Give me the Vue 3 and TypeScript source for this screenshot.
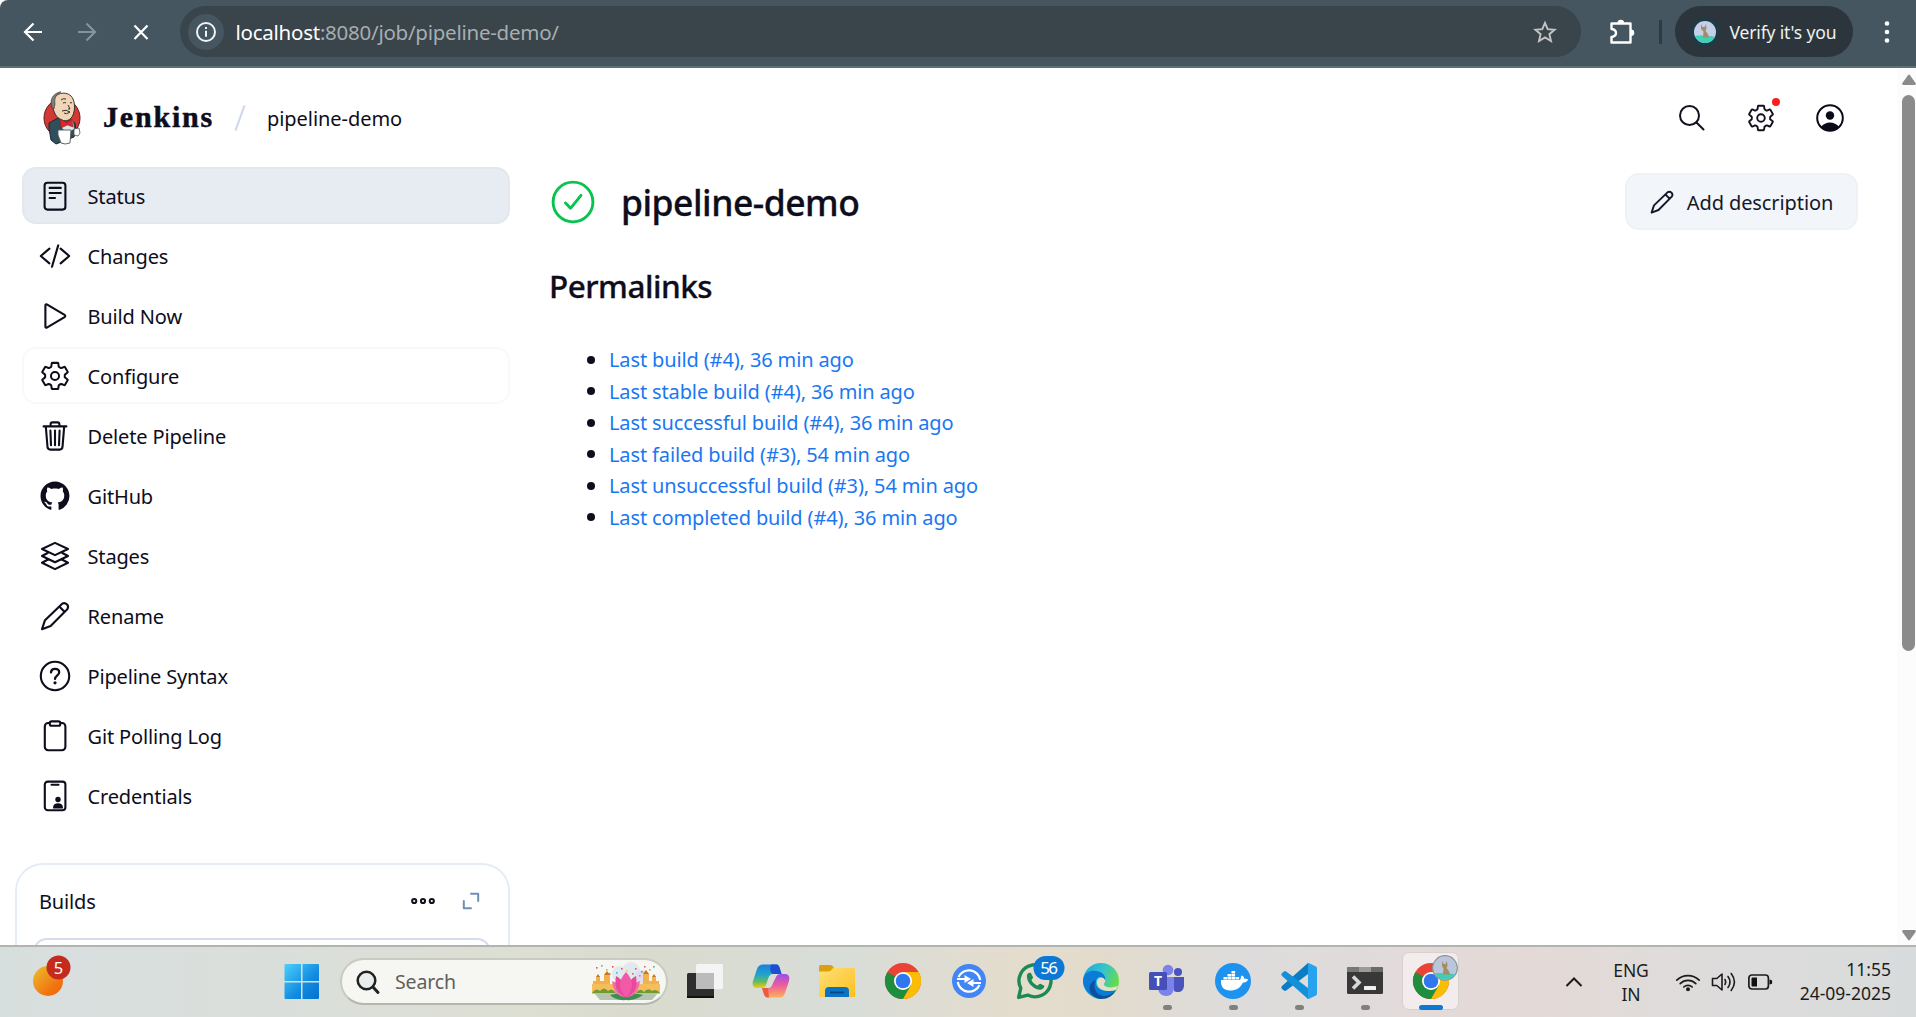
<script setup lang="ts">
interface SideItem { label: string; icon: string; state?: string }

const gear = '<g transform="translate(-.7 -.7) scale(.0613)" stroke-width="33"><circle cx="256" cy="256" r="66"/><path d="M416.39 256a154 154 0 01-1.53 20.8l45.2 35.4a10.8 10.8 0 012.46 13.8l-42.77 74a10.8 10.8 0 01-13.14 4.6l-44.9-18.1a16 16 0 00-15.17 1.75A164 164 0 01325 400.8a16 16 0 00-8.82 12.14l-6.73 47.9A11 11 0 01298.8 470h-85.6a11 11 0 01-10.7-8.9l-6.72-47.8a16 16 0 00-9-12.2 155 155 0 01-21.46-12.6 16 16 0 00-15.1-1.7l-44.9 18.1a10.8 10.8 0 01-13.14-4.6l-42.77-74a10.8 10.8 0 012.45-13.75l38.2-30a16 16 0 006-14.1c-.35-4.15-.57-8.3-.57-12.5s.2-8.25.58-12.35a16 16 0 00-6.07-13.94l-38.2-30A10.8 10.8 0 0149.5 186l42.75-74a10.8 10.8 0 0113.14-4.6l44.9 18.1a16 16 0 0015.17-1.75A164 164 0 01187 111.2a16 16 0 008.82-12.14l6.73-47.9A11 11 0 01213.2 42h85.6a11 11 0 0110.7 8.9l6.7 47.8a16 16 0 009 12.2 155 155 0 0121.5 12.6 16 16 0 0015.1 1.7l44.9-18.1a10.8 10.8 0 0113.1 4.6l42.8 74a10.8 10.8 0 01-2.45 13.75l-38.2 30a16 16 0 00-6.05 14.1c.3 4.1.5 8.3.5 12.45z"/></g>'
const pencil = '<path d="M2 28.2L5 19.2 22.2 2.7a3.9 3.9 0 015.3 5.3L10.6 25zM19.3 5.6l5.2 5.2"/>'

const items: SideItem[] = [
  { label: 'Status', state: 'active', icon: '<rect x="4.6" y="1.8" width="20.8" height="26.8" rx="2.8"/><path d="M9.6 6.9h11.2M9.6 12h11.2M9.6 17h5.4"/>' },
  { label: 'Changes', icon: '<path d="M9.4 7.6L.8 15l8.6 7.4M18.2 4.4L12 25.8M20.6 7.6l8.6 7.4-8.6 7.4"/>' },
  { label: 'Build Now', icon: '<path d="M5.4 4.2v21.6c0 .8.7 1.2 1.4.8l17.8-10.5c.9-.6.9-1.6 0-2.2L6.8 3.4c-.7-.4-1.4 0-1.4.8z"/>' },
  { label: 'Configure', state: 'outlined', icon: gear },
  { label: 'Delete Pipeline', icon: '<path d="M3.6 5.4h22.8M5.8 5.4l1.7 20.4c.1 1.9 1.1 2.8 2.8 2.8h9.4c1.7 0 2.7-.9 2.8-2.8l1.7-20.4M10.6 5.2V3.3c0-1.2.7-1.9 1.9-1.9h5c1.2 0 1.9.7 1.9 1.9v1.9M10.4 9.6l.6 14.6M15 9.6v14.6M19.6 9.6L19 24.2"/>' },
  { label: 'GitHub', icon: '<path transform="translate(.5 .6) scale(1.81)" fill="currentColor" stroke="none" d="M8 0C3.58 0 0 3.58 0 8c0 3.54 2.29 6.53 5.47 7.59.4.07.55-.17.55-.38 0-.19-.01-.82-.01-1.49-2.01.37-2.53-.49-2.69-.94-.09-.23-.48-.94-.82-1.13-.28-.15-.68-.52-.01-.53.63-.01 1.08.58 1.23.82.72 1.21 1.87.87 2.33.66.07-.52.28-.87.51-1.07-1.78-.2-3.64-.89-3.64-3.95 0-.87.31-1.59.82-2.15-.08-.2-.36-1.02.08-2.12 0 0 .67-.21 2.2.82.64-.18 1.32-.27 2-.27s1.36.09 2 .27c1.53-1.04 2.2-.82 2.2-.82.44 1.1.16 1.92.08 2.12.51.56.82 1.27.82 2.15 0 3.07-1.87 3.75-3.65 3.95.29.25.54.73.54 1.48 0 1.07-.01 1.93-.01 2.2 0 .21.15.46.55.38A8.01 8.01 0 0016 8c0-4.42-3.58-8-8-8z"/>' },
  { label: 'Stages', icon: '<path d="M15 1.9l13 6.1-13 6.1L2 8zM7.6 12L2 15l13 6.3L28 15l-5.6-3M7.6 18.8L2 21.8l13 6.3 13-6.3-5.6-3"/>' },
  { label: 'Rename', icon: pencil },
  { label: 'Pipeline Syntax', icon: '<circle cx="15" cy="15" r="14.2"/><path stroke-width="2.3" d="M11 11.3c.2-2 1.7-3.4 4-3.4 2.5 0 4.2 1.4 4.2 3.4 0 3.3-4.2 3.3-4.2 6.6"/><circle cx="15" cy="21.8" r="1.6" fill="currentColor" stroke="none"/>' },
  { label: 'Git Polling Log', icon: '<rect x="4.8" y="2" width="20.6" height="27.2" rx="3.4"/><rect x="9.8" y=".4" width="10.5" height="4.4" rx="1.8" fill="#fff"/>' },
  { label: 'Credentials', icon: '<rect x="4.8" y=".6" width="20.6" height="28.6" rx="3"/><path d="M11.5 3.8h7"/><g fill="currentColor" stroke="none"><circle cx="18" cy="18.5" r="2.7"/><path d="M13.1 27.4v-1.2c0-2.6 2.1-4 4.9-4s4.9 1.4 4.9 4v1.2z"/></g>' },
]

const links: string[] = [
  'Last build (#4), 36 min ago',
  'Last stable build (#4), 36 min ago',
  'Last successful build (#4), 36 min ago',
  'Last failed build (#3), 54 min ago',
  'Last unsuccessful build (#3), 54 min ago',
  'Last completed build (#4), 36 min ago',
]

const confetti: [number, number, string][] = [
  [4, 4, '#e55'], [9, 2, '#5b9'], [14, 6, '#e6a23c'], [20, 3, '#d55'], [24, 9, '#4bb'], [29, 5, '#e55'], [43, 5, '#e55'], [49, 8, '#3b9'],
  [52, 3, '#e65'], [57, 6, '#e6a23c'], [61, 3, '#4ba'], [40, 10, '#d66'], [17, 10, '#e66'], [34, 7, '#fb5'], [47, 12, '#d84'],
]

const chrome = '<circle r="18" fill="#ea4335"/><path d="M-15.6-9A18 18 0 000 18L8 4.5-7.8 4.5z" fill="#1e8e3e"/><path d="M0 18A18 18 0 0015.6-9H0L7.8 4.5z" fill="#fbbc04"/><path d="M-15.6-9L-7.8 4.5 0 0z" fill="#1e8e3e"/><circle r="9" fill="#fff"/><circle r="7.3" fill="#2f76ef"/>'

interface App { name: string; running?: boolean; active?: boolean; art: string }
const apps: App[] = [
  { name: 'Task view', art: '<rect x="-18" y="-8" width="27" height="25" rx="1.5" fill="#2e2e2e"/><path d="M-18 16h27" stroke="#111" stroke-width="2"/><rect x="-9" y="-17" width="27" height="25" rx="1.5" fill="#f4f4f4"/><path d="M-9-8H9V8H-9z" fill="#bbb"/>' },
  { name: 'Copilot', art: '<path d="M-8-16.5H5C8-16.5 8.5-14 9.5-10L10.5-7H2C-1-7-2-5-3-2L-5 4c-1 2-2 3-5 3h-4c-4 0-5-3-4-7l4-12c1-3 3-4.5 6-4.5z" fill="url(#cpA)"/><path d="M0-16.5h5c3 0 3.5 2.5 4.5 6L10.5-7H2C0-7 0-10-1-12z" fill="#1d4fd0"/><path d="M8 16.5H-3C-6 16.5-7 14-8 10l-1-3h6c3 0 4-2 5-5L5-4c1-2 2-3 5-3h4c4 0 5 3 4 7l-4 12c-1 3-3 4.5-6 4.5z" fill="url(#cpB)"/><path d="M-9 7h6l1 9.5C-6 17-7 14-8 10z" fill="#ef5a3c"/>' },
  { name: 'Files', art: '<path d="M-18-14.5q0-1.5 1.5-1.5h10q1.5 0 2.5 1.5L-2.5-12v8H-18z" fill="#dca00f"/><path d="M-18-9.5h10c2 0 3-3.5 5-3.5h19.5q1.5 0 1.5 1.5V16H-18z" fill="url(#folder)"/><path d="M-12 16V10q0-4 4-4H8q4 0 4 4v6z" fill="#0b72c4"/><path d="M-7 11.5H7" stroke="#08458a" stroke-width="1.8"/>' },
  { name: 'Chrome', art: chrome },
  { name: 'Sync', art: '<circle r="17" fill="#4285f4"/><g fill="none" stroke="#fff" stroke-width="2.2"><path d="M-10.5-4A11.5 11.5 0 0111.3-1M10.5 4A11.5 11.5 0 01-11.3 1"/><path d="M-12-2H-2M12 2H2"/></g><path d="M-4.5-6L2-2-4.5 2zM4.5-2L-2 2 4.5 6z" fill="#fff"/>' },
  { name: 'WhatsApp', art: '<path d="M-14.2 7.2A16 16 0 11-7.2 14.1L-16.4 16.4z" fill="none" stroke="#1c8a54" stroke-width="3.4" stroke-linejoin="round"/><path d="M-8-6c.5-2 3-2.8 4-1.8l2 4c0 1.6-1.5 2-1.5 3C-2.5 1.5.5 4 2.2 4.5 3.6 4.5 4 2.8 5.5 2.8l3.8 2C9.5 7 7 9 4.5 8.8-2 8-9 1-8-6z" fill="#1c8a54"/><rect x="-1.5" y="-25" width="31" height="24" rx="12" fill="#0a78d4"/><text x="14" y="-6.7" font-size="17" text-anchor="middle" fill="#fff" textLength="17.5">56</text>' },
  { name: 'Edge', art: '<circle r="18" fill="url(#edA)"/><path d="M-18-1C-17-9-10-11-5-10 2-9 5-5 4-1 1-5-4-5-5 0c-1 8 7 12 20 9A18 18 0 01-18-1z" fill="#0a7bd6"/><path d="M-5-1c-3 4-2 12 4 15 5 2 11 1 16.5-5.5A18 18 0 01-1 18C-13 16-15 2-5-1z" fill="#0f4f9e"/><path d="M-4 0c1-4 6-5 8-1 1 3-2 3-1 5 2 3 8 3 14 1l-2 4C4 12-5 8-4 0z" fill="#e4decb"/>' },
  { name: 'Teams', running: true, art: '<circle cx="11" cy="-9" r="4" fill="#4b53bc"/><circle cx="1" cy="-11" r="5.3" fill="#7b83eb"/><path d="M5-4h12V4c0 8-7 8-10 6z" fill="#4b53bc"/><path d="M-8-4h15V5c0 7-3 10-8 10s-8-4-8-8z" fill="#7b83eb"/><rect x="-18" y="-9" width="18" height="18" rx="1.5" fill="#464eb8"/><text x="-9" y="5" text-anchor="middle" font-size="14" font-weight="700" fill="#fff">T</text>' },
  { name: 'Docker', running: true, art: '<circle r="18" fill="#1d92ef"/><path d="M-12-1H7c1-1 .5-3 1.5-4.5C11-5 11-3 11.5-2c1.5-.4 3 0 3.5.7C14 1 12 1.5 10 1.5 7 7.5 3 9.5-3 9.5-9 9.5-12.5 6-12-1z" fill="#fff"/><path d="M-9.5-4h3.6v2.6h-3.6zM-5.5-4h3.6v2.6h-3.6zM-1.5-4h3.6v2.6h-3.6zM2.5-4h3.6v2.6H2.5zM-5.5-7h3.6v2.6h-3.6zM-1.5-7h3.6v2.6h-3.6zM-1.5-10h3.6v2.6h-3.6z" fill="#fff"/>' },
  { name: 'Code', running: true, art: '<path d="M9-18l-26 23q-1.5 1.5 0 3l2 1.5q1 .8 2.2 0L9-7z" fill="#0a7cc4"/><path d="M9 18l-26-23q-1.5-1.5 0-3l2-1.5q1-.8 2.2 0L9 7z" fill="#1291d8"/><path d="M8-17.5q.5-.8 1.6-.4L17-14.5q1 .6 1 2v25q0 1.4-1 2L9.6 17.9q-1 .4-1.6-.4c1 0 1-1 1-2v-31c0-1 0-2-1-2z" fill="#27a2ee"/>' },
  { name: 'Terminal', running: true, art: '<rect x="-18" y="-14" width="36" height="27" rx="1.5" fill="#383838"/><path d="M-18-12.5q0-1.5 1.5-1.5H-6v5h-12z" fill="#787878"/><path d="M-6-14H6v5H-6z" fill="#9a9a9a"/><path d="M6-14h10.5q1.5 0 1.5 1.5V-9H6z" fill="#6a6a6a"/><path d="M-12-4.5L-6 1.5-12 7.5" fill="none" stroke="#d8d8d8" stroke-width="3.6"/><rect x="-1" y="5" width="12" height="4" rx=".6" fill="#efefef"/>' },
  { name: 'Chrome profile', active: true, art: chrome + '<circle cx="14" cy="-13" r="12.3" fill="#b9c6dc" stroke="#8e9498" stroke-width="1.2"/><path d="M3.5-7.5c5-.8 14-.5 20.5 1A12 12 0 013.500-7.500z" fill="#43cdb9"/><path d="M11-20l1.500 3h2l1.500-3 .5 5-1 2c2 2 3 4 3.500 6.500H12l.5-6-1.500-2.500z" fill="#a58c65"/>' },
]
</script>

<template>
  <div class="screen">
    <header class="toolbar">
      <svg class="nav" width="150" height="30" viewBox="0 0 150 30" fill="none" stroke="#fff" stroke-width="2.2">
        <path d="M42 15H25.5M33.5 6.5L25 15l8.5 8.5" />
        <path d="M78 15h16.5M86.5 6.5L95 15l-8.5 8.5" stroke="#87939a" />
        <path d="M134.500 8.500l13 13.500M147.500 8.500l-13 13.500" />
      </svg>
      <div class="omnibox">
        <span class="info"><svg width="22" height="22" viewBox="0 0 22 22" fill="none" stroke="#f0f3f4" stroke-width="2"><circle cx="11" cy="11" r="9" /><path d="M11 9.8v6M11 6v2" /></svg></span>
        <span class="url"><b>localhost</b>:8080/job/pipeline-demo/</span>
        <svg class="star" width="24" height="24" viewBox="0 0 24 24" fill="none" stroke="#c3c4c4" stroke-width="1.9"><path d="M12 2.8l2.7 6.3 6.9.6-5.2 4.5 1.6 6.8-6-3.6-6 3.6 1.6-6.8-5.2-4.5 6.9-.6z" /></svg>
      </div>
      <svg class="puzzle" width="26" height="26" viewBox="0 0 26 26" fill="none" stroke="#fff" stroke-width="2.4" stroke-linejoin="round"><path d="M2.5 4.500H21.500V23.500H2.500V18c3.500-.5 4.500-2.500 4.500-4s-1-3.500-4.500-4z" /><path d="M8.500 4a3.300 3.300 0 016.600 0zM22 10.500a3.300 3.300 0 010 6.600z" fill="#fff" stroke="none" /></svg>
      <i class="divider"></i>
      <div class="profile">
        <svg width="28" height="28" viewBox="0 0 28 28"><circle cx="14" cy="14" r="13" fill="none" stroke="#173f4a" stroke-width="2" /><circle cx="14" cy="14" r="11" fill="#c4d0e8" /><path d="M4 18c5-.8 14-.5 20 1A11 11 0 014 18z" fill="#3fd0b8" /><path d="M10 6l1.500 3h2L15 6l.5 5-1 2c2 2 3 4 3.500 6.500h-6l.5-6L10 11z" fill="#a58c65" /></svg>
        <span>Verify it's you</span>
      </div>
      <svg class="more" width="8" height="24" viewBox="0 0 8 24" fill="#fff"><circle cx="4" cy="3.500" r="2.300" /><circle cx="4" cy="12" r="2.300" /><circle cx="4" cy="20.500" r="2.300" /></svg>
    </header>

    <div class="viewport">
      <div class="page">
        <div class="topbar">
          <svg class="butler" width="38" height="54" viewBox="0 0 38 54">
            <ellipse cx="19" cy="27" rx="18" ry="19" fill="#d33833" stroke="#5b1d1c" stroke-width="1" />
            <path d="M6 32l9-5 10 1 7 4 1 8-2 6-18 7-5-4-2-12z" fill="#2f4f5c" stroke="#1b2b33" stroke-width="1" />
            <path d="M9 10C12 1 26-1 30 8c2 5 2 11 0 16-2 5-7 7-11 5-6-2-8-8-9-12-2-1-2-4-1-7z" fill="#f0d6b7" stroke="#3b322b" stroke-width="1" />
            <path d="M9 17C6 9 10 2 18 .8 13 4 11 7 12 13l-1 5z" fill="#837a78" stroke="#333" stroke-width=".6" />
            <path d="M20 12q2-1 3 0M27 12q1-1 2 0M25 14l2 4h-2M19 20q4-2 8 1-4 3-6 1M18 9q2-2 5-1" fill="none" stroke="#3a2d28" stroke-width="1" />
            <path d="M19 30l6 3 5-3 1 8-7 4-5-5z" fill="#dfe6ea" />
            <path d="M17 28l6.500 3.500L29 28l1 8-5.500-2-6.500 3z" fill="#e0262c" stroke="#801a1c" stroke-width=".5" />
            <path d="M15 39h13l-1 13q-5 2-9 0l-3-8z" fill="#fff" stroke="#555" stroke-width=".9" />
            <path d="M31 38l5-1 1 5-2 3-4-1z" fill="#fff" stroke="#555" stroke-width=".8" />
          </svg>
          <span class="brand">Jenkins</span>
          <svg class="slash" width="12" height="28" viewBox="0 0 12 28"><path d="M10.500 1.500L1.500 26.500" stroke="#cfd9e8" stroke-width="2.200" /></svg>
          <span class="crumb">pipeline-demo</span>
          <svg class="search" width="26" height="26" viewBox="0 0 26 26" fill="none" stroke="#111120" stroke-width="2" stroke-linecap="round"><circle cx="10.500" cy="10.500" r="9.500" /><path d="M17.500 17.500l7 7" /></svg>
          <span class="manage">
            <svg width="28" height="28" viewBox="0 0 30 30" fill="none" stroke="#111120" v-html="gear"></svg>
            <i></i>
          </span>
          <svg width="28" height="28" viewBox="0 0 28 28"><circle cx="14" cy="14" r="12.800" fill="none" stroke="#0a0a18" stroke-width="2" /><circle cx="14" cy="11.500" r="4.200" fill="#0a0a18" /><path d="M5 23c2-3 5.500-4.500 9-4.500s7 1.500 9 4.500c-5 4.600-13 4.600-18 0z" fill="#0a0a18" /></svg>
        </div>

        <div class="columns">
          <aside>
            <nav>
              <a v-for="it in items" :key="it.label" :class="it.state">
                <svg width="30" height="30" viewBox="0 0 30 30" fill="none" stroke="currentColor" stroke-width="2.100" stroke-linecap="round" stroke-linejoin="round" v-html="it.icon"></svg>
                <span>{{ it.label }}</span>
              </a>
            </nav>
            <section class="builds">
              <div class="builds-head">
                <span>Builds</span>
                <svg width="26" height="10" viewBox="0 0 26 10" fill="none" stroke="#111120" stroke-width="2"><circle cx="4.200" cy="5" r="2.100" /><circle cx="13" cy="5" r="2.100" /><circle cx="21.800" cy="5" r="2.100" /></svg>
                <svg class="expand" width="18" height="18" viewBox="0 0 18 18" fill="none" stroke="#6f8fbb" stroke-width="2" stroke-linecap="round" stroke-linejoin="round"><path d="M9 1.800h7.200V9M1.800 9v7.200H9" /></svg>
              </div>
              <div class="filter"></div>
            </section>
          </aside>
          <main>
            <div class="headline">
              <svg width="44" height="44" viewBox="0 0 44 44" fill="none" stroke="#08c34e" stroke-linecap="round" stroke-linejoin="round"><circle cx="22" cy="22" r="19.900" stroke-width="2.900" /><path d="M14.500 23l5 5.300 10.500-13" stroke-width="2.900" /></svg>
              <h1>pipeline-demo</h1>
              <button>
                <svg width="24" height="24" viewBox="0 0 30 30" fill="none" stroke="currentColor" stroke-width="2.400" stroke-linecap="round" stroke-linejoin="round" v-html="pencil"></svg>
                <span>Add description</span>
              </button>
            </div>
            <h2>Permalinks</h2>
            <ul>
              <li v-for="l in links" :key="l"><i></i><a>{{ l }}</a></li>
            </ul>
          </main>
        </div>
      </div>
      <div class="scrollbar">
        <svg width="14" height="12" viewBox="0 0 14 12"><path d="M6 1.200q1-1.200 2 0L13.600 9q.7 2-1 2H1.400q-1.700 0-1-2z" fill="#8b8b8b" /></svg>
        <i></i>
        <svg class="down" width="14" height="12" viewBox="0 0 14 12"><path d="M6 10.800q1 1.200 2 0L13.600 3q.7-2-1-2H1.400q-1.700 0-1 2z" fill="#8b8b8b" /></svg>
      </div>
    </div>

    <footer class="taskbar">
      <svg width="0" height="0" class="defs">
        <defs>
          <linearGradient id="cpA" x1="0" y1="0" x2="0" y2="1"><stop offset="0" stop-color="#1a7fe0" /><stop offset=".45" stop-color="#22a6c8" /><stop offset=".75" stop-color="#6dbb55" /><stop offset="1" stop-color="#f0cf1a" /></linearGradient>
          <linearGradient id="cpB" x1="0" y1="0" x2="0" y2="1"><stop offset="0" stop-color="#a04be8" /><stop offset=".5" stop-color="#ee5f9a" /><stop offset="1" stop-color="#ffb156" /></linearGradient>
          <linearGradient id="folder" x1="0" y1="0" x2="1" y2="1"><stop offset="0" stop-color="#ffe07a" /><stop offset="1" stop-color="#fcc01c" /></linearGradient>
          <linearGradient id="edA" x1="0" y1="0" x2="1" y2=".4"><stop offset="0" stop-color="#1fa5dc" /><stop offset=".55" stop-color="#35c3cf" /><stop offset="1" stop-color="#66dc4b" /></linearGradient>
          <linearGradient id="sun" x1="0" y1="0" x2="1" y2="1"><stop offset="0" stop-color="#ecc02f" /><stop offset=".7" stop-color="#f2730f" /><stop offset="1" stop-color="#ee6410" /></linearGradient>
          <linearGradient id="win" x1="0" y1="0" x2="1" y2="1"><stop offset="0" stop-color="#4bd0fb" /><stop offset=".6" stop-color="#118ae0" /><stop offset="1" stop-color="#0572cf" /></linearGradient>
        </defs>
      </svg>
      <svg class="weather" width="40" height="70" viewBox="0 0 40 70"><circle cx="16" cy="34" r="15" fill="url(#sun)" /><circle cx="26.500" cy="20.500" r="12" fill="#c42b1c" /><text x="26.500" y="26.500" text-anchor="middle" font-size="16.500" fill="#fff">5</text></svg>
      <svg class="start" width="36" height="70" viewBox="0 0 36 70" fill="url(#win)"><path d="M1.500 17H17v17H.5V18q0-1 1-1zM18.500 17H34q1 0 1 1v16H18.500zM.5 35.500H17V52H1.500q-1 0-1-1zM18.500 35.500H35V51q0 1-1 1H18.500z" /></svg>
      <div class="searchbox">
        <svg width="24" height="24" viewBox="0 0 24 24" fill="none" stroke="#222" stroke-width="2.500" stroke-linecap="round"><circle cx="10.500" cy="10.500" r="8.800" fill="#e9eeed" /><path d="M17 17l5 5.500" stroke-width="3" /></svg>
        <span>Search</span>
        <svg class="lotus" width="68" height="38" viewBox="0 0 68 38">
          <g fill="#dfe9ee"><circle cx="28" cy="11" r="8" /><circle cx="39" cy="8" r="9" /><circle cx="50" cy="14" r="7" fill="#dfdcf2" /></g>
          <path d="M1 30V18h3v-4q2-3 4 0v4h4v-6q3-4 6 0v18zM67 30V18h-3v-4q-2-3-4 0v4h-3v-7q-3-4-6 0v19z" fill="#f1b24e" />
          <path d="M0 21h24v10H0zM44 21h24v10H44z" fill="#f6bd5c" />
          <path d="M4 14l2-3 2 3zM12 12l3-4 3 4zM51 11l3-4 3 4zM60 14l2-3 2 3z" fill="#c47a1c" />
          <path d="M0 30q4-6 8-2 4-5 8 0 4-4 8 2H0zM44 30q4-6 8-1 4-5 8-1 4-3 8 2z" fill="#6f9b35" />
          <path d="M2 30h64l-6 7H8z" fill="#b6c4b0" />
          <path d="M18 32q9-3 16 0 8-3 17 0-8 6-17 5-10 1-16-5z" fill="#3f8d50" />
          <path d="M20 18q8 1 14 16-12 0-14-16zM48 18q-8 1-14 16 12 0 14-16z" fill="#ef6fae" />
          <path d="M24 13q9 4 10 21-13-4-10-21zM44 13q-9 4-10 21 13-4 10-21z" fill="#e9489b" />
          <path d="M34 9q12 13 0 25-12-12 0-25z" fill="#f25aa8" />
          <rect v-for="([x, y, c], n) in confetti" :key="n" :x="x" :y="y" width="1.600" height="1.600" :fill="c" />
        </svg>
      </div>
      <div class="apps">
        <div v-for="a in apps" :key="a.name" class="app" :class="{ active: a.active, running: a.running }">
          <svg width="66" height="70" viewBox="-33 -34 66 70" v-html="a.art"></svg>
        </div>
      </div>
      <svg class="chev" width="18" height="12" viewBox="0 0 18 12" fill="none" stroke="#1c1c1c" stroke-width="2"><path d="M1.500 10L9 2.500l7.500 7.500" /></svg>
      <div class="lang"><span>ENG</span><span>IN</span></div>
      <svg class="wifi" width="26" height="20" viewBox="0 0 26 20" fill="none" stroke="#1c1c1c" stroke-width="1.700" stroke-linecap="round"><path d="M1.800 8.200a15.800 15.800 0 0122.400 0M5.200 11.700a11 11 0 0115.600 0M8.800 15a6 6 0 018.400 0" /><circle cx="13" cy="17.300" r="2" fill="#1c1c1c" stroke="none" /></svg>
      <svg class="vol" width="26" height="22" viewBox="0 0 26 22" fill="none" stroke="#1c1c1c" stroke-width="1.600" stroke-linecap="round" stroke-linejoin="round"><path d="M1.500 7.500h4.300l5.200-4.500v16l-5.200-4.500H1.500zM14 8.500q1.500 2.500 0 5M17 5.500q4 5.500 0 11M20.200 2.500q6.500 8.500 0 17" /></svg>
      <svg class="bat" width="26" height="18" viewBox="0 0 26 18"><rect x="1.900" y="2" width="19.500" height="14" rx="3" fill="none" stroke="#1c1c1c" stroke-width="1.700" /><path d="M4.500 5.500q0-1 1-1H10v9H5.500q-1 0-1-1zM22.500 6.500l1.800.4q.8.300.8 1.100v2q0 .8-.8 1.100l-1.800.4z" fill="#111" /></svg>
      <div class="clock"><span class="time">11:55</span><span class="date">24-09-2025</span></div>
    </footer>
  </div>
</template>

<style>
body { margin: 0; overflow: hidden; }
</style>

<style scoped>
.screen { width: 1916px; height: 1017px; overflow: hidden; display: flex; flex-direction: column; background: #fff; color: #0d0d1c; font: 20px/26px "Noto Sans", "Open Sans", sans-serif; letter-spacing: -0.15px; }
svg { display: block; flex: none; overflow: visible; }
span, a, h1, h2 { white-space: nowrap; }

.toolbar { box-sizing: border-box; height: 68px; flex: none; display: flex; align-items: center; background: #455660; border-bottom: 2px solid #5f6f78; padding-bottom: 3px; border-top-left-radius: 8px; }
.omnibox { height: 51px; width: 1401px; margin-left: 30px; border-radius: 26px; background: #39444b; display: flex; align-items: center; box-sizing: border-box; padding: 0 24px 0 8px; }
.info { width: 36px; height: 36px; border-radius: 50%; background: #455660; display: grid; place-items: center; }
.url { margin-left: 11.500px; color: #a8adb0; font-size: 20.5px; letter-spacing: -0.25px; }
.url b { font-weight: 400; color: #fff; }
.star { margin-left: auto; }
.puzzle { margin-left: 28px; }
.divider { width: 3px; height: 24px; background: #2f3a40; margin-left: 24px; border-radius: 1px; }
.profile { margin-left: 13px; width: 178px; height: 51px; border-radius: 26px; background: #2b353b; display: flex; align-items: center; color: #eef1f2; font-size: 17.500px; box-sizing: border-box; padding-left: 16px; gap: 10.500px; }
.more { margin-left: 30px; }

.viewport { flex: 1; min-height: 0; display: flex; }
.page { flex: 1; min-width: 0; overflow: hidden; }
.topbar { height: 99px; box-sizing: border-box; display: flex; align-items: center; padding: 1px 53px 0 43px; }
.brand { font: 700 30px/40px "Liberation Serif", serif; margin-left: 22px; padding-bottom: 2px; width: 131px; letter-spacing: 1.800px; -webkit-text-stroke: 0.500px #0d0d1c; }
.crumb { margin-left: 21px; padding-top: 2px; letter-spacing: -0.05px; }
.search { margin-left: auto; margin-right: 42px; }
.manage { position: relative; margin-right: 41px; }
.manage i { position: absolute; left: 25px; top: -6px; width: 8px; height: 8px; border-radius: 50%; background: #fa1f1f; }

.columns { display: flex; }
aside { width: 510px; flex: none; }
nav { padding-left: 22px; display: flex; flex-direction: column; gap: 3px; }
nav a { height: 57px; box-sizing: border-box; border: 2px solid transparent; border-radius: 14px; display: flex; align-items: center; padding-left: 16px; gap: 17.500px; }
nav a span { padding-top: 2px; }
nav a.active { background: #e7ebf2; border-color: #e3e7ee; }
nav a.outlined { border-color: #f9f9fa; }
.builds { margin: 39px 0 0 15px; width: 495px; height: 160px; box-sizing: border-box; border: 2px solid #e6ecf4; border-radius: 28px; padding: 0 16px; }
.builds-head { height: 73px; display: flex; align-items: center; padding: 0 0 1px 6px; box-sizing: border-box; }
.builds-head span { margin-right: auto; padding-top: 1px; }
.expand { margin: 0 12px 0 26px; }
.filter { height: 50px; border: 2px solid #d5dcea; border-radius: 14px; margin: 0 1px 0 0; }

main { flex: 1; padding: 0 39px 0 41px; }
.headline { display: flex; align-items: center; height: 57px; margin-top: 6px; }
.headline > svg { margin-bottom: -1px; }
h1 { margin: 0 auto 0 26px; padding-top: 1px; font-weight: 500; font-size: 35.500px; line-height: 44px; letter-spacing: -0.500px; -webkit-text-stroke: 0.300px #0d0d1c; }
button { font: inherit; letter-spacing: inherit; color: #17172a; width: 233px; height: 57px; border: 2px solid #eef2f6; background: #f2f5f9; border-radius: 14px; display: flex; align-items: center; justify-content: center; gap: 13px; padding: 0; letter-spacing: -0.1px; }
button span { padding-top: 2px; }
h2 { margin: 35px 0 0 -2px; font-weight: 500; font-size: 31.500px; line-height: 42px; letter-spacing: -0.500px; -webkit-text-stroke: 0.300px #0d0d1c; }
ul { list-style: none; margin: 37px 0 0; padding: 0 0 0 36px; }
li { height: 31.5px; display: flex; align-items: center; }
li i { width: 8px; height: 8px; border-radius: 50%; background: #0d0d1c; margin-right: 14px; }
li a { color: #1a77f2; padding-top: 1px; letter-spacing: -0.13px; }

.scrollbar { width: 19px; flex: none; background: #fcfcfc; display: flex; flex-direction: column; align-items: flex-end; padding-top: 6px; box-sizing: border-box; }
.scrollbar i { width: 13px; height: 556px; margin: 9px 1px 0 0; border-radius: 7px; background: #8b8b8b; }
.scrollbar .down { margin-top: auto; margin-bottom: 4px; }

.taskbar { height: 72px; box-sizing: border-box; border-top: 2px solid #b2b4af; flex: none; display: flex; align-items: center; color: #1c1c1c; background: linear-gradient(90deg, #d7dfde 0, #dadedb 14%, #dddfd3 27%, #dadbce 33%, #d8ddd8 44%, #e4dccd 53%, #e3dbcb 57%, #dddcdb 64%, #e0dbdb 71%, #e4d9d6 80%, #dedcdb 88%, #d8dbdc 100%); font-size: 18px; }
.defs { position: absolute; }
.weather { margin-left: 32px; }
.start { margin-left: 212px; }
.searchbox { width: 328px; height: 47px; box-sizing: border-box; border: 2px solid #c8cbc0; border-bottom-color: #b3b6ad; border-radius: 24px; background: #f6f6f2; margin-left: 20px; display: flex; align-items: center; padding: 0 6px 0 14px; margin-bottom: 1px; }
.searchbox span { margin-left: 15px; font-size: 19.500px; color: #5f5f5c; }
.lotus { margin-left: auto; }
.apps { display: flex; margin-left: 4px; }
.app { position: relative; width: 66px; height: 70px; }
.app svg { position: relative; }
.app.running::after { content: ''; position: absolute; left: 29px; bottom: 7px; width: 9px; height: 5px; border-radius: 3px; background: #80807e; }
.app.active::before { content: ''; position: absolute; left: 4px; top: 5px; width: 57px; height: 58px; box-sizing: border-box; border: 1.500px solid #d8d0cf; border-radius: 7px; background: #f2edec; }
.app.active::after { content: ''; position: absolute; left: 21px; bottom: 7px; width: 24px; height: 5px; border-radius: 3px; background: #0a78d4; }
.chev { margin-left: 101px; }
.lang { width: 60px; margin: 0 0 1px 18px; display: flex; flex-direction: column; align-items: center; line-height: 24px; font-size: 17.500px; }
.wifi { margin-left: 14px; margin-bottom: 1px; }
.vol { margin-left: 10px; margin-bottom: 1px; }
.bat { margin-left: 10px; margin-bottom: 1px; }
.clock { margin-left: auto; margin-bottom: 2px; padding-right: 25px; display: flex; flex-direction: column; align-items: flex-end; line-height: 24px; font-size: 17.500px; letter-spacing: 0; }
</style>
